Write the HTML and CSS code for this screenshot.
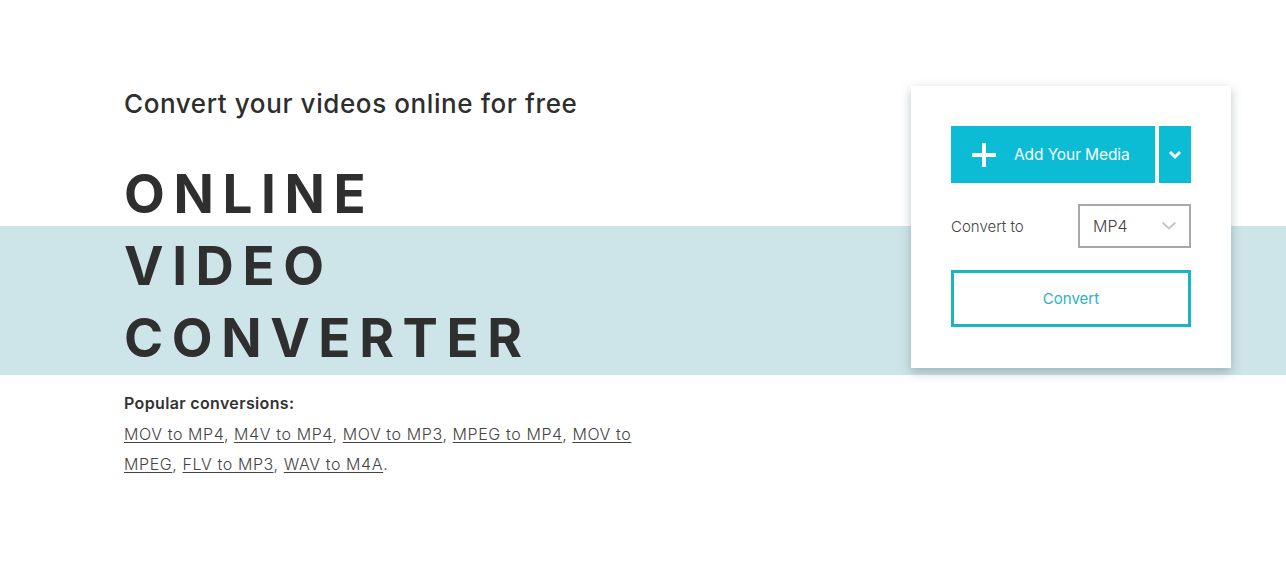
FILE: index.html
```html
<!DOCTYPE html>
<html lang="en">
<head>
<meta charset="utf-8">
<title>Online Video Converter</title>
<link rel="stylesheet" href="styles.css">
</head>
<body>
<section class="hero">
  <div class="hero-inner">
    <div class="intro">
      <h2 class="tagline">Convert your videos online for free</h2>
      <h1 class="title">ONLINE<br>VIDEO<br>CONVERTER</h1>
      <div class="popular">
        <div class="popular-label">Popular conversions:</div>
        <p class="popular-links"><a href="#">MOV to MP4</a>, <a href="#">M4V to MP4</a>, <a href="#">MOV to MP3</a>, <a href="#">MPEG to MP4</a>, <a href="#">MOV to MPEG</a>, <a href="#">FLV to MP3</a>, <a href="#">WAV to M4A</a>.</p>
      </div>
    </div>
    <div class="card">
      <div class="add-row">
        <button class="add-btn">
          <svg class="plus" width="26" height="26" viewBox="0 0 26 26"><path d="M13 1v24M1 13h24" stroke="#fff" stroke-width="4" fill="none"/></svg>
          <span>Add Your Media</span>
        </button>
        <button class="add-more">
          <svg width="14" height="10" viewBox="0 0 14 10"><path d="M2 2l5 5 5-5" stroke="#fff" stroke-width="3" fill="none"/></svg>
        </button>
      </div>
      <div class="format-row">
        <span class="format-label">Convert to</span>
        <div class="select">
          <span>MP4</span>
          <svg width="16" height="10" viewBox="0 0 16 10"><path d="M1.5 1.5l6.5 6 6.5-6" stroke="#c8c8c8" stroke-width="2" fill="none"/></svg>
        </div>
      </div>
      <button class="convert-btn">Convert</button>
    </div>
  </div>
</section>
</body>
</html>
```
FILE: styles.css
```css
html, body {
  margin: 0;
  padding: 0;
  background: #fff;
}
body {
  font-family: Inter, "Noto Sans", sans-serif;
  color: #333;
}
.hero {
  height: 570px;
  background: linear-gradient(to bottom, #fff 0, #fff 226px, #cde4e8 226px, #cde4e8 375px, #fff 375px);
}
.hero-inner {
  display: flex;
  justify-content: space-between;
  padding: 86px 55px 0 124px;
}
.intro {
  width: 540px;
}
.tagline {
  margin: 0;
  font-size: 26px;
  font-weight: 500;
  line-height: 36px;
  color: #2e2e2e;
  letter-spacing: 0.6px;
}
.title {
  margin: 36px 0 0;
  font-size: 53px;
  line-height: 72px;
  font-weight: 700;
  letter-spacing: 0.162em;
  color: #2f2f2f;
}
.popular {
  margin-top: 17px;
}
.popular-label {
  font-size: 16px;
  font-weight: 600;
  color: #333;
  line-height: 24px;
  letter-spacing: 0.35px;
}
.popular-links {
  margin: 4px 0 0;
  font-size: 16px;
  font-weight: 300;
  line-height: 30px;
  color: #444;
  letter-spacing: 0.6px;
  width: 530px;
}
.popular-links a {
  color: #444;
  text-decoration: underline;
  text-decoration-thickness: 1px;
  text-underline-offset: 2px;
}
.card {
  width: 240px;
  padding: 40px 40px 41px;
  background: #fff;
  box-shadow: 0 4px 10px rgba(60, 90, 95, 0.35);
  align-self: flex-start;
}
.add-row {
  display: flex;
  gap: 4px;
  height: 57px;
}
.add-btn {
  flex: 1;
  display: flex;
  align-items: center;
  gap: 17px;
  padding: 0 0 0 20px;
  border: 0;
  background: #0bbcd4;
  color: #fff;
  font-family: Inter, sans-serif;
  font-size: 15.5px;
  letter-spacing: -0.1px;
  cursor: pointer;
}
.add-more {
  width: 32px;
  border: 0;
  padding: 0;
  background: #0bbcd4;
  display: flex;
  align-items: center;
  justify-content: center;
}
.format-row {
  display: flex;
  align-items: center;
  justify-content: space-between;
  margin-top: 21px;
  height: 44px;
}
.format-label {
  font-size: 15px;
  font-weight: 300;
  color: #444;
}
.select {
  box-sizing: border-box;
  width: 113px;
  height: 44px;
  border: 2px solid #a8a8a8;
  display: flex;
  align-items: center;
  justify-content: space-between;
  padding: 0 12px 0 13px;
  font-size: 16px;
  font-weight: 300;
  color: #444;
}
.convert-btn {
  display: block;
  box-sizing: border-box;
  width: 240px;
  height: 57px;
  margin-top: 22px;
  border: 3px solid #1ab5c3;
  background: #fff;
  color: #2bb2c2;
  font-family: Inter, sans-serif;
  font-size: 15px;
}
```
